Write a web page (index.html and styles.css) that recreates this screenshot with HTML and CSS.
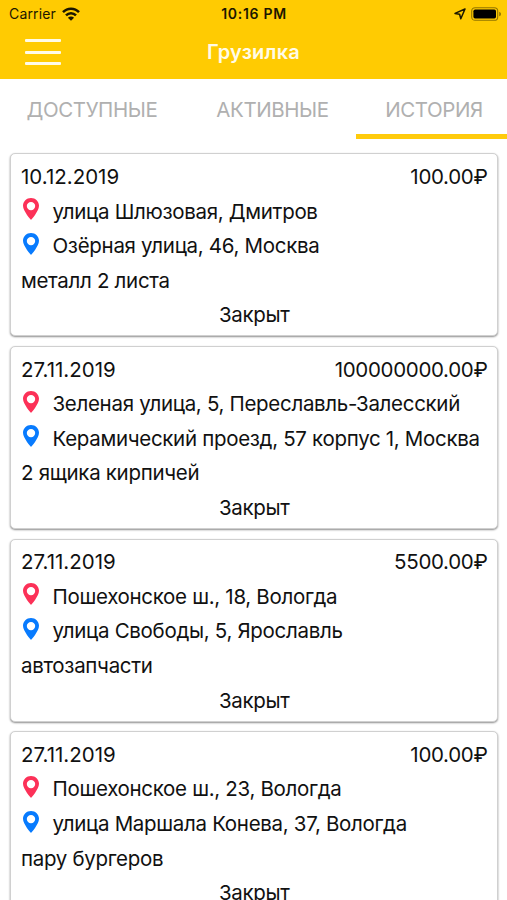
FILE: index.html
```html
<!DOCTYPE html>
<html lang="ru">
<head>
  <meta charset="utf-8">
  <title>Грузилка</title>
  <link rel="stylesheet" href="styles.css">
</head>
<body>

<svg class="sprite" width="0" height="0">
  <symbol id="pin" viewBox="0 0 16 22">
    <path fill-rule="evenodd" d="M8 0C3.5 0 0 3.4 0 7.8C0 13.2 8 22 8 22S16 13.2 16 7.8C16 3.4 12.5 0 8 0ZM8 3.9A4.2 4.2 0 1 1 8 12.3A4.2 4.2 0 1 1 8 3.9Z"/>
  </symbol>
</svg>

<header class="header">
  <div class="status">
    <div class="status-left">
      <span class="carrier">Carrier</span>
      <svg class="wifi" width="18" height="14" viewBox="0 0 18 14" fill="none" stroke="#1c1700" stroke-width="2.5">
        <path d="M1 5.2C5.4 .5 12.6 .5 17 5.2"/>
        <path d="M4 8.3C6.8 5.4 11.2 5.4 14 8.3"/>
        <path fill="#1c1700" stroke="none" d="M9 13.8L5.9 10.7C7.6 9 10.4 9 12.1 10.7Z"/>
      </svg>
    </div>
    <span class="time">10:16 PM</span>
    <div class="status-right">
      <svg width="12" height="12" viewBox="0 0 12 12" fill="none" stroke="#1c1700" stroke-width="1.5" stroke-linejoin="round">
        <path d="M11 1L1 5.4L5.6 6.2L6.8 10.8Z"/>
      </svg>
      <svg width="31" height="14" viewBox="0 0 31 14">
        <rect x=".7" y=".7" width="26" height="12.6" rx="3.4" fill="none" stroke="#927500" stroke-width="1.1"/>
        <rect x="2.4" y="2.5" width="22.6" height="9" rx="1.7" fill="#000"/>
        <path d="M28.2 4.7C30.6 5.6 30.6 8.4 28.2 9.3Z" fill="#927500"/>
      </svg>
    </div>
  </div>
  <div class="navbar">
    <button class="menu" aria-label="Меню"><i></i><i></i><i></i></button>
    <h1 class="title">Грузилка</h1>
  </div>
</header>

<nav class="tabs">
  <a class="tab">ДОСТУПНЫЕ</a>
  <a class="tab">АКТИВНЫЕ</a>
  <a class="tab active">ИСТОРИЯ</a>
</nav>

<main class="list">
  <div class="card">
    <div class="row between"><span class="date">10.12.2019</span><span>100.00₽</span></div>
    <div class="row"><svg class="pin from"><use href="#pin"/></svg><span>улица Шлюзовая, Дмитров</span></div>
    <div class="row"><svg class="pin to"><use href="#pin"/></svg><span>Озёрная улица, 46, Москва</span></div>
    <div class="row">металл 2 листа</div>
    <div class="row state">Закрыт</div>
  </div>
  <div class="card">
    <div class="row between"><span class="date">27.11.2019</span><span>100000000.00₽</span></div>
    <div class="row"><svg class="pin from"><use href="#pin"/></svg><span>Зеленая улица, 5, Переславль-Залесский</span></div>
    <div class="row"><svg class="pin to"><use href="#pin"/></svg><span>Керамический проезд, 57 корпус 1, Москва</span></div>
    <div class="row">2 ящика кирпичей</div>
    <div class="row state">Закрыт</div>
  </div>
  <div class="card">
    <div class="row between"><span class="date">27.11.2019</span><span>5500.00₽</span></div>
    <div class="row"><svg class="pin from"><use href="#pin"/></svg><span>Пошехонское ш., 18, Вологда</span></div>
    <div class="row"><svg class="pin to"><use href="#pin"/></svg><span>улица Свободы, 5, Ярославль</span></div>
    <div class="row">автозапчасти</div>
    <div class="row state">Закрыт</div>
  </div>
  <div class="card">
    <div class="row between"><span class="date">27.11.2019</span><span>100.00₽</span></div>
    <div class="row"><svg class="pin from"><use href="#pin"/></svg><span>Пошехонское ш., 23, Вологда</span></div>
    <div class="row"><svg class="pin to"><use href="#pin"/></svg><span>улица Маршала Конева, 37, Вологда</span></div>
    <div class="row">пару бургеров</div>
    <div class="row state">Закрыт</div>
  </div>
</main>

</body>
</html>
```

FILE: styles.css
```css
* {
  box-sizing: border-box;
}
body {
  margin: 0;
  height: 900px;
  overflow: hidden;
  font-family: Inter, "Liberation Sans", sans-serif;
  color: #111;
  background-color: #fff;
}
.sprite {
  display: block;
}
.header {
  height: 79px;
  background-color: #ffcb02;
}
.status {
  display: grid;
  grid-template-columns: 1fr auto 1fr;
  align-items: center;
  height: 27px;
  padding: 0 5px 0 9px;
  color: #1c1700;
  font-size: 14px;
}
.status-left, .status-right {
  display: flex;
  align-items: center;
  gap: 6px;
}
.carrier {
  letter-spacing: 0.15px;
}
.status-right {
  justify-content: flex-end;
  gap: 5px;
}
.time {
  margin-right: 3px;
  font-weight: 600;
  letter-spacing: 0.7px;
}
.navbar {
  display: grid;
  grid-template-columns: 1fr auto 1fr;
  align-items: center;
  height: 50px;
}
.menu {
  display: flex;
  flex-direction: column;
  gap: 8.5px;
  width: 36px;
  margin-left: 25px;
  padding: 0;
  border: none;
  background: none;
}
.menu i {
  height: 3px;
  border-radius: 1px;
  background-color: #fffbe8;
}
.title {
  margin: 0;
  color: #fffbe8;
  font-size: 20px;
  font-weight: 600;
  letter-spacing: 0.2px;
}
.tabs {
  display: flex;
  justify-content: space-between;
  height: 60px;
}
.tab {
  display: flex;
  justify-content: center;
  width: 184px;
  padding-top: 17px;
  border-bottom: 5px solid transparent;
  color: #b0b0b0;
  font-size: 20.5px;
  line-height: 27px;
  letter-spacing: -0.4px;
}
.tab:nth-child(2) {
  width: 168px;
  padding-left: 5px;
}
.tab:nth-child(3) {
  width: 151px;
}
.tab.active {
  border-bottom-color: #ffcb0c;
  padding-left: 5px;
}
.list {
  display: flex;
  flex-direction: column;
  gap: 9.6px;
  padding: 14.4px 9.5px 0 10px;
}
.card {
  flex: none;
  height: 183px;
  padding: 4.9px 9px 0 10px;
  border: 1px solid #d0d0d0;
  border-radius: 5px;
  background-color: #fff;
  box-shadow: 0 1px 2px rgba(0, 0, 0, 0.45);
}
.row {
  display: flex;
  align-items: center;
  height: 34.6px;
  font-size: 20.5px;
  letter-spacing: -0.31px;
  white-space: nowrap;
}
.between {
  justify-content: space-between;
}
.date {
  letter-spacing: 0;
}
.state {
  justify-content: center;
}
.pin {
  flex: none;
  width: 16px;
  height: 22px;
  margin: -4px 13.5px 0 2px;
}
.from {
  fill: #fc3158;
}
.to {
  fill: #087bfe;
}
```
